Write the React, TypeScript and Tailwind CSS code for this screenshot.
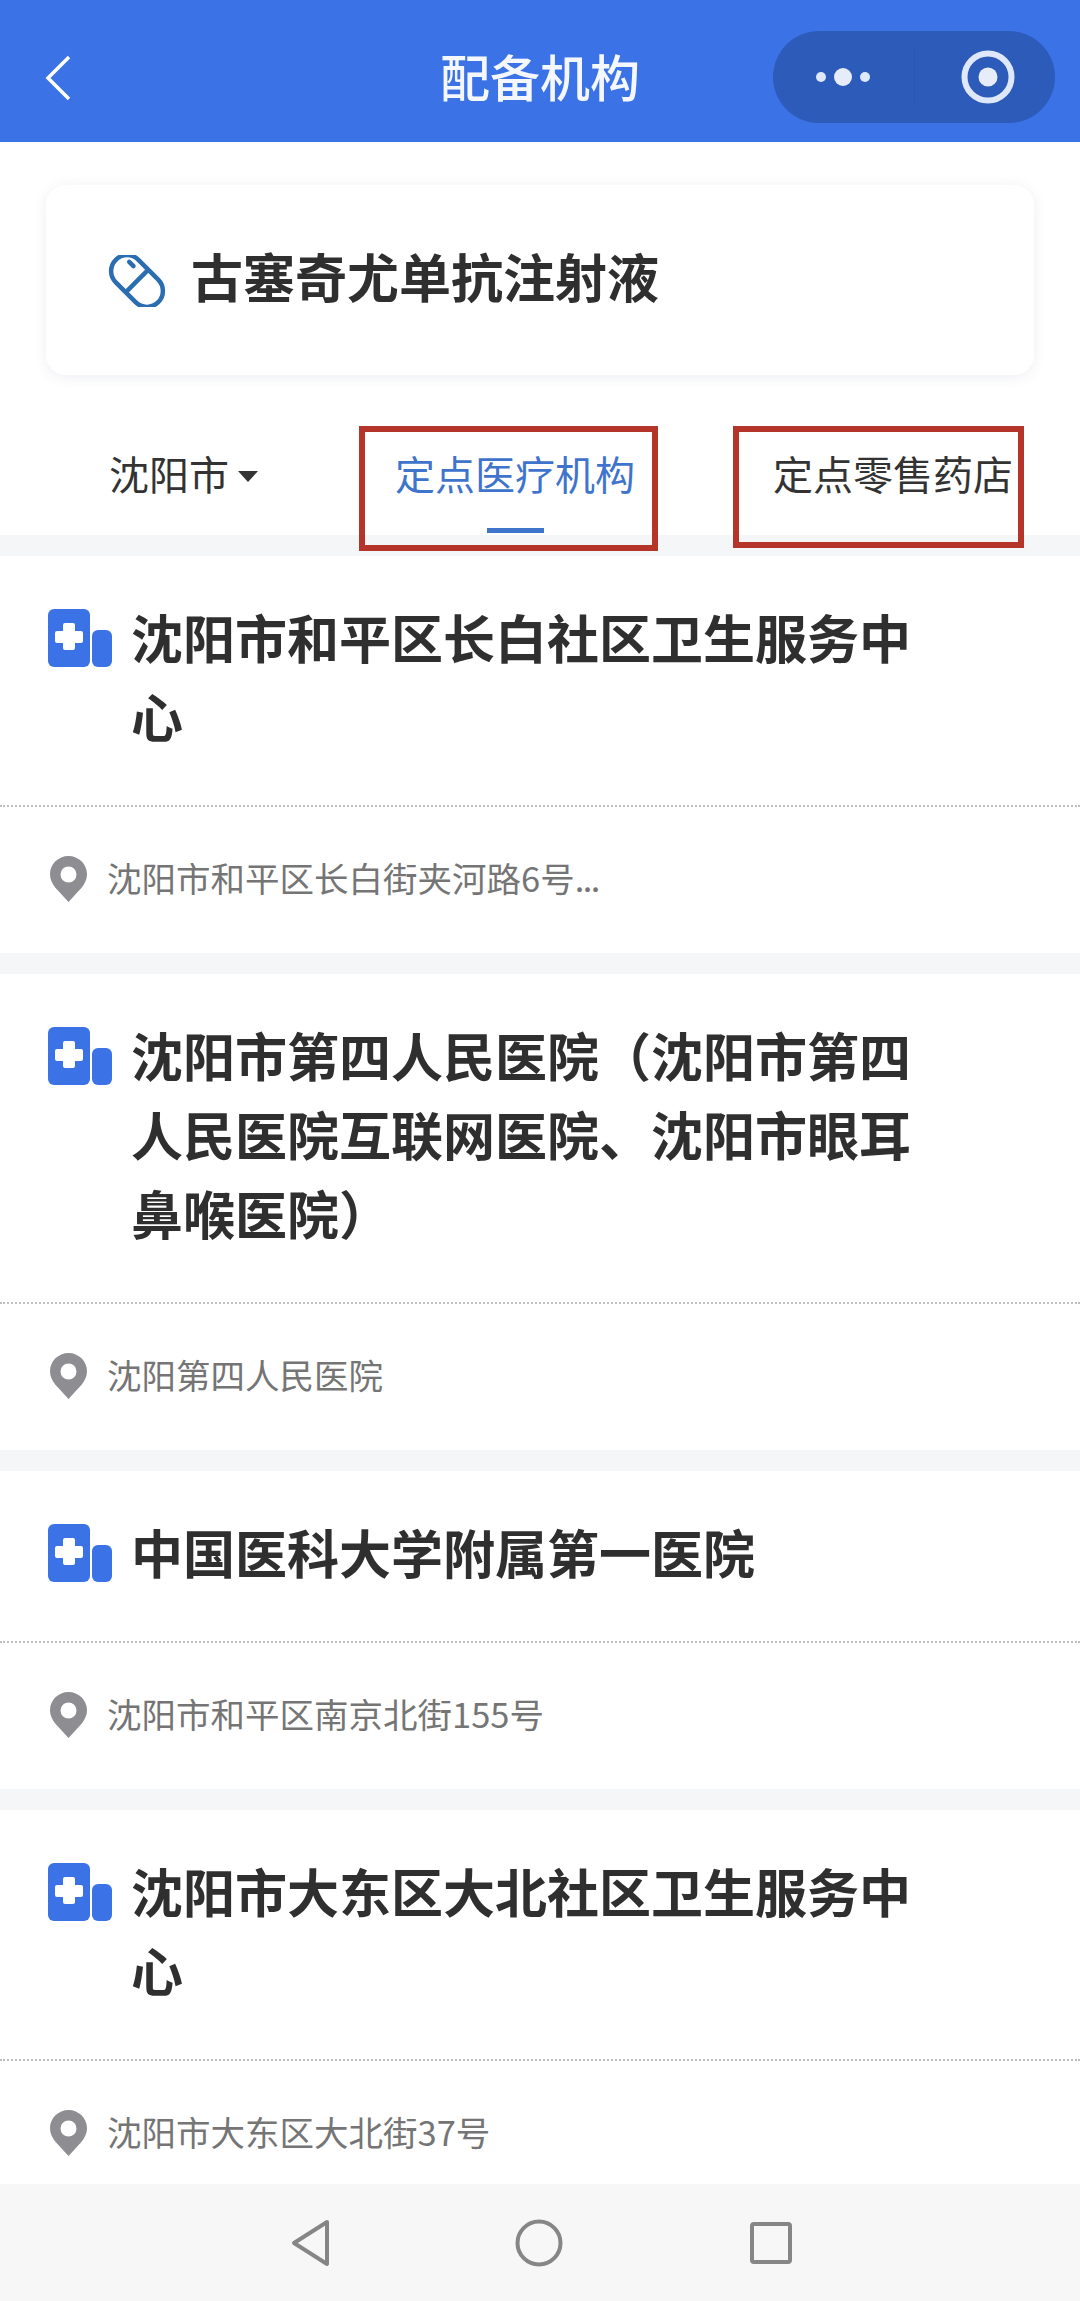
const font = "[font-family:'Noto_Sans_CJK_SC','Noto_Sans',sans-serif]";

function PlusIcon() {
  return (
    <svg width="64" height="58" viewBox="0 0 64 58" className="shrink-0">
      <rect x="0" y="0" width="42" height="58" rx="6" fill="#3b72e6" />
      <rect x="44" y="21" width="20" height="37" rx="6" fill="#3b72e6" />
      <path d="M17 13h8a2 2 0 0 1 2 2v6h6a2 2 0 0 1 2 2v8a2 2 0 0 1-2 2h-6v5a2 2 0 0 1-2 2h-8a2 2 0 0 1-2-2v-5H9a2 2 0 0 1-2-2v-8a2 2 0 0 1 2-2h6v-6a2 2 0 0 1 2-2z" fill="#fff" transform="translate(0 1)" />
    </svg>
  );
}

function PinIcon() {
  return (
    <svg width="37" height="46" viewBox="0 0 37 46" className="shrink-0">
      <path fillRule="evenodd" d="M18.5 0C8.3 0 0 8.2 0 18.3c0 5 2.2 9.3 5.2 13.3L18.5 46l13.3-14.4c3-4 5.2-8.3 5.2-13.3C37 8.2 28.7 0 18.5 0zm0 10.5a8 8 0 1 1 0 16 8 8 0 0 1 0-16z" fill="#8e8e92" />
    </svg>
  );
}

function Item({ lines, address, more }: { lines: string[]; address: string; more?: boolean }) {
  return (
    <div className="bg-white">
      <div className="flex pl-[48px] pt-[41px] pb-[50px] border-b-2 border-dotted border-[#bdbdbd]">
        <div className="w-[83px] shrink-0 pt-[12px]">
          <PlusIcon />
        </div>
        <div className="text-[52px] leading-[79px] font-bold text-[#2f2f2f]">
          {lines.map((l) => (
            <div key={l} className="whitespace-nowrap">{l}</div>
          ))}
        </div>
      </div>
      <div className="h-[146px] flex items-center pl-[50px] pb-[3px]">
        <PinIcon />
        <span className="ml-[20px] mb-[3px] text-[34.5px] leading-[46px] text-[#757575] whitespace-nowrap">
          {address}
          {more && <span className="tracking-[-1.5px]">...</span>}
        </span>
      </div>
    </div>
  );
}

export default function App() {
  return (
    <div className={`${font} w-[1080px] h-[2301px] flex flex-col overflow-hidden bg-white`}>
      <header className="h-[142px] shrink-0 bg-[#3b72e6] flex items-center relative">
        <svg width="28" height="46" viewBox="0 0 28 46" className="ml-[44px] mt-[14px]">
          <path d="M25 2 L4 23 L25 44" fill="none" stroke="#fff" strokeWidth="3.5" />
        </svg>
        <h1 className="absolute left-0 right-0 top-[49px] text-center text-[50px] leading-[52px] font-medium text-[#f4f7fe]">配备机构</h1>
        <div className="absolute left-[773px] top-[31px] w-[282px] h-[92px] rounded-full bg-[#2d5bb9] flex items-center">
          <div className="w-[141px] h-full flex items-center justify-center">
            <svg width="58" height="20" viewBox="0 0 58 20">
              <circle cx="6" cy="10" r="5" fill="#dfe8fa" />
              <circle cx="28" cy="10" r="9" fill="#e6ecf9" />
              <circle cx="50" cy="10" r="5" fill="#dfe8fa" />
            </svg>
          </div>
          <div className="w-px h-[56px] bg-[#2a55ad]" />
          <div className="flex-1 flex items-center justify-center">
            <svg width="54" height="54" viewBox="0 0 54 54" className="ml-[6px]">
              <circle cx="27" cy="27" r="23.5" fill="none" stroke="#dfe8fa" strokeWidth="6" />
              <circle cx="27" cy="27" r="9.5" fill="#e6ecf9" />
            </svg>
          </div>
        </div>
      </header>

      <section className="shrink-0 px-[46px] pt-[43px]">
        <div className="h-[190px] rounded-[20px] bg-white shadow-[0_2px_14px_rgba(60,70,110,0.09)] flex items-center pl-[62px]">
          <svg width="58" height="52" viewBox="0 0 58 52" className="shrink-0 mt-[2px]">
            <g transform="rotate(45 29 26)" fill="none" stroke="#2a6db0" strokeWidth="4.5">
              <rect x="-1" y="10" width="60" height="32" rx="16" />
              <path d="M29 10v32" />
              <path d="M10 18h6" strokeLinecap="round" />
            </g>
          </svg>
          <h2 className="ml-[25px] mb-[8px] text-[52px] leading-[70px] font-bold text-[#2f2f2f] whitespace-nowrap">古塞奇尤单抗注射液</h2>
        </div>
      </section>

      <nav className="relative shrink-0 h-[160px] flex items-start pl-[109px] pt-[73px] text-[40px] leading-[50px] text-[#333]">
        <span className="whitespace-nowrap">沈阳市</span>
        <svg width="20" height="11" viewBox="0 0 20 11" className="ml-[9px] mt-[23px] shrink-0">
          <path d="M0 0h20L10 11z" fill="#333" />
        </svg>
        <div className="ml-[137px] w-[240px] flex flex-col items-center">
          <span className="whitespace-nowrap text-[#3f74cc]">定点医疗机构</span>
          <span className="block w-[57px] h-[5px] mt-[30px] bg-[#3f74cc]" />
        </div>
        <span className="ml-[138px] whitespace-nowrap">定点零售药店</span>
        <div className="absolute left-[359px] top-[51px] w-[299px] h-[125px] border-[6px] border-[#b5352a] z-10" />
        <div className="absolute left-[733px] top-[51px] w-[291px] h-[122px] border-[6px] border-[#b5352a] z-10" />
      </nav>

      <main className="flex-1 min-h-0 overflow-hidden bg-[#f5f6f8] pt-[21px] flex flex-col gap-[21px]">
        <Item lines={["沈阳市和平区长白社区卫生服务中", "心"]} address="沈阳市和平区长白街夹河路6号" more />
        <Item lines={["沈阳市第四人民医院（沈阳市第四", "人民医院互联网医院、沈阳市眼耳", "鼻喉医院）"]} address="沈阳第四人民医院" />
        <Item lines={["中国医科大学附属第一医院"]} address="沈阳市和平区南京北街155号" />
        <Item lines={["沈阳市大东区大北社区卫生服务中", "心"]} address="沈阳市大东区大北街37号" />
      </main>

      <footer className="h-[117px] shrink-0 bg-[#f7f7f7] flex items-center justify-center gap-[187px]">
        <svg width="40" height="48" viewBox="0 0 40 48" className="ml-[3px] mr-[-3px]">
          <path d="M36 3 L3 24 L36 45 Z" fill="none" stroke="#868686" strokeWidth="4" strokeLinejoin="round" />
        </svg>
        <svg width="48" height="48" viewBox="0 0 48 48">
          <circle cx="24" cy="24" r="21.5" fill="none" stroke="#868686" strokeWidth="4" />
        </svg>
        <svg width="42" height="42" viewBox="0 0 42 42">
          <rect x="2" y="2" width="38" height="38" rx="2" fill="none" stroke="#868686" strokeWidth="4" />
        </svg>
      </footer>
    </div>
  );
}
